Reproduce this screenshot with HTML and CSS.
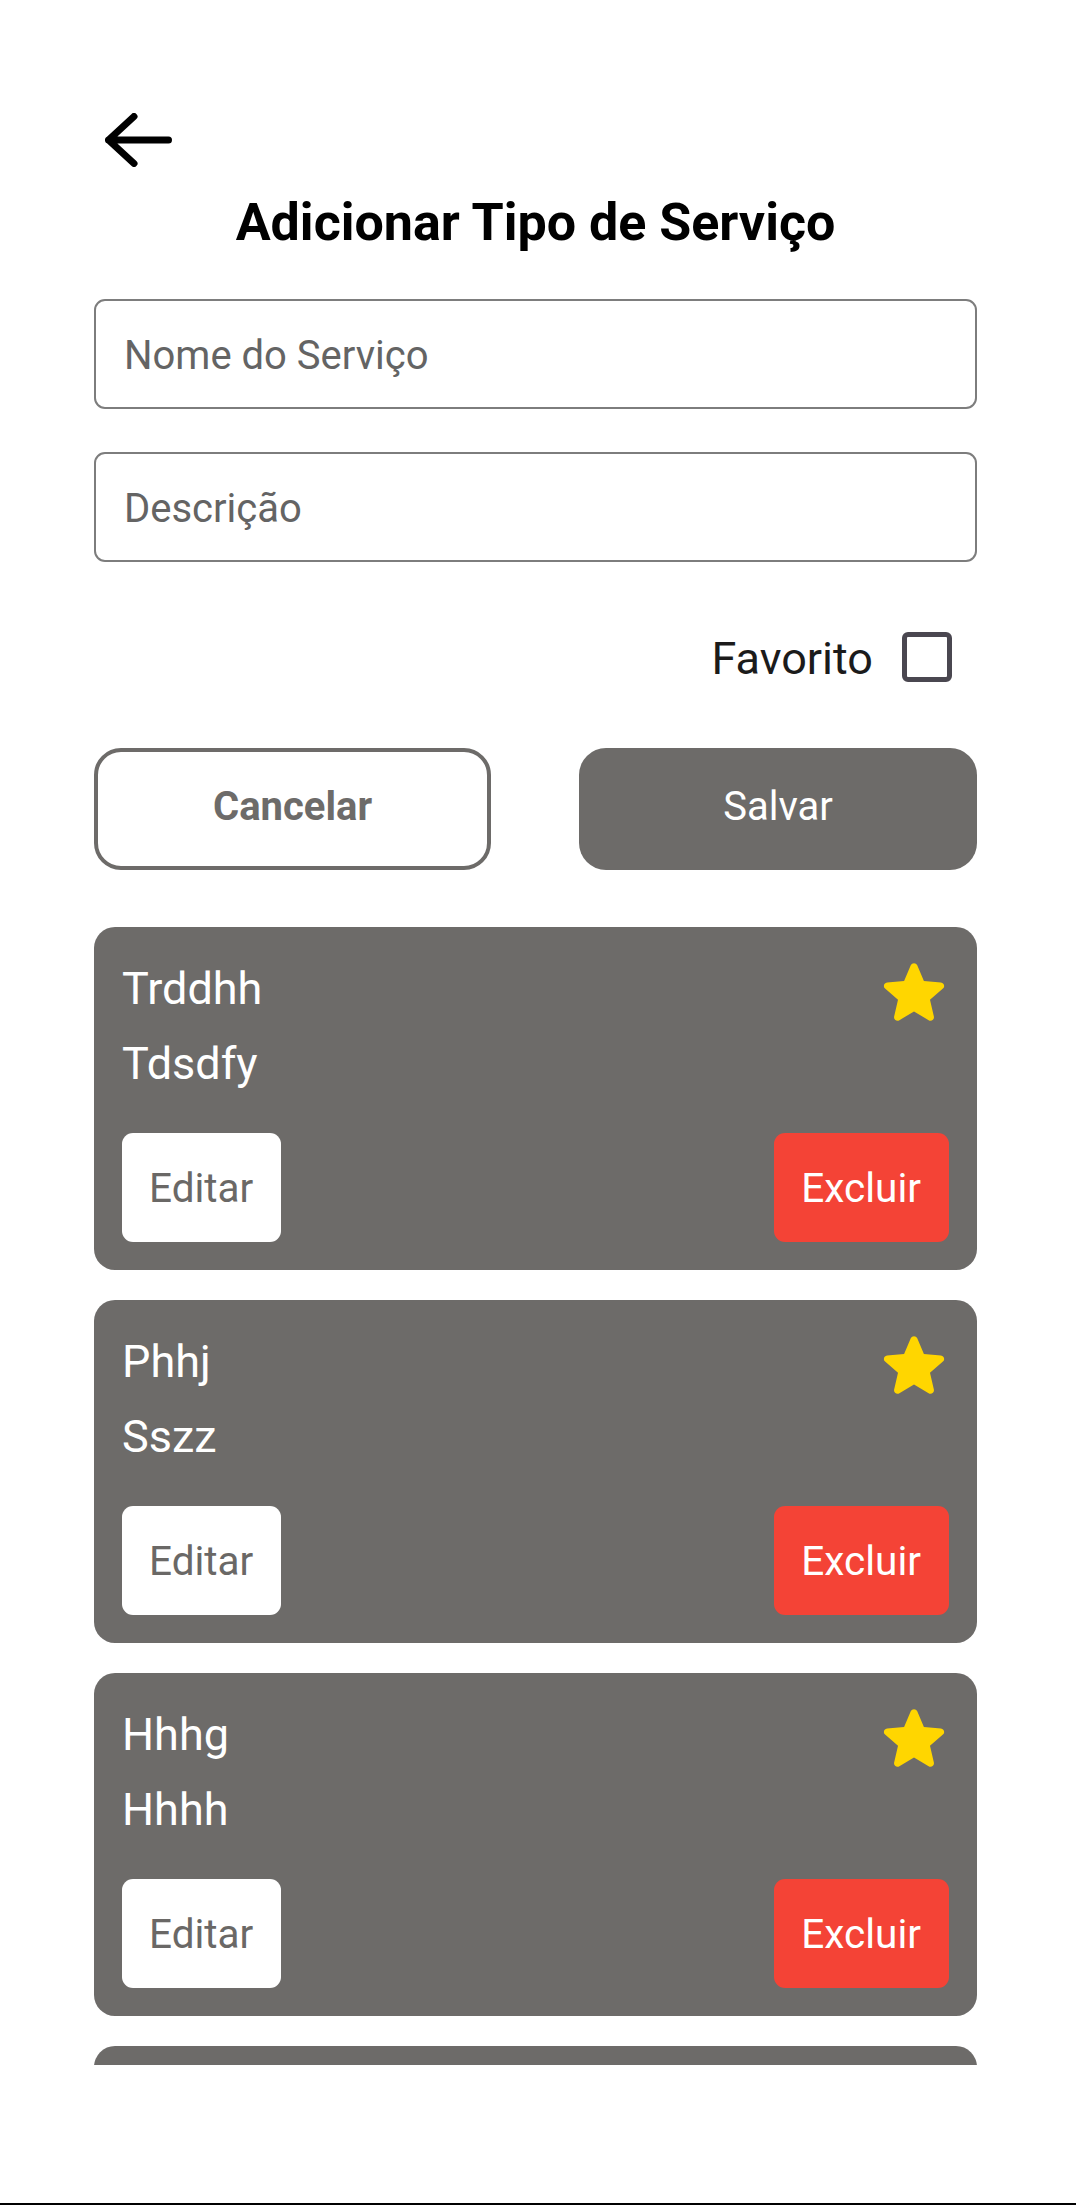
FILE: index.html
```html
<!DOCTYPE html>
<html lang="pt-BR">
<head>
<meta charset="utf-8">
<title>Adicionar Tipo de Serviço</title>
<link rel="stylesheet" href="styles.css">
</head>
<body>
<div class="screen">
  <div class="content">
    <button class="back" aria-label="Voltar">
      <svg width="67" height="54" viewBox="0 0 67 54"><path d="M3.5 27H63.5M3.5 27L29 3.5M3.5 27L29 50.5" fill="none" stroke="#000" stroke-width="7" stroke-linecap="round" stroke-linejoin="round"/></svg>
    </button>
    <h1 class="title">Adicionar Tipo de Serviço</h1>
    <div class="field"><span class="placeholder">Nome do Serviço</span></div>
    <div class="field field-2"><span class="placeholder">Descrição</span></div>
    <div class="fav-row">
      <span class="fav-label">Favorito</span>
      <span class="checkbox"></span>
    </div>
    <div class="actions">
      <button class="btn btn-cancel">Cancelar</button>
      <button class="btn btn-save">Salvar</button>
    </div>
    <div class="list">
      <div class="card">
        <div class="card-head">
          <div class="card-texts">
            <div class="card-name">Trddhh</div>
            <div class="card-desc">Tdsdfy</div>
          </div>
          <svg class="star" width="62" height="62" viewBox="3.4 2.4 17.2 17.6"><path d="M12 17.27l4.15 2.51c.76.46 1.69-.22 1.49-1.08l-1.1-4.72 3.67-3.18c.67-.58.31-1.68-.57-1.75l-4.83-.41-1.89-4.46c-.34-.81-1.5-.81-1.84 0L9.19 8.63l-4.83.41c-.88.07-1.24 1.17-.57 1.75l3.67 3.18-1.1 4.72c-.2.86.73 1.54 1.49 1.08l4.150-2.5z" fill="#ffd600"/></svg>
        </div>
        <div class="card-actions">
          <button class="cbtn cbtn-edit">Editar</button>
          <button class="cbtn cbtn-del">Excluir</button>
        </div>
      </div>
      <div class="card">
        <div class="card-head">
          <div class="card-texts">
            <div class="card-name">Phhj</div>
            <div class="card-desc">Sszz</div>
          </div>
          <svg class="star" width="62" height="62" viewBox="3.4 2.4 17.2 17.6"><path d="M12 17.27l4.15 2.51c.76.46 1.69-.22 1.49-1.08l-1.1-4.72 3.67-3.18c.67-.58.31-1.68-.57-1.75l-4.83-.41-1.89-4.46c-.34-.81-1.5-.81-1.84 0L9.19 8.63l-4.83.41c-.88.07-1.24 1.17-.57 1.75l3.67 3.18-1.1 4.72c-.2.86.73 1.54 1.49 1.08l4.15-2.5z" fill="#ffd600"/></svg>
        </div>
        <div class="card-actions">
          <button class="cbtn cbtn-edit">Editar</button>
          <button class="cbtn cbtn-del">Excluir</button>
        </div>
      </div>
      <div class="card">
        <div class="card-head">
          <div class="card-texts">
            <div class="card-name">Hhhg</div>
            <div class="card-desc">Hhhh</div>
          </div>
          <svg class="star" width="62" height="62" viewBox="3.4 2.4 17.2 17.6"><path d="M12 17.27l4.15 2.51c.76.46 1.69-.22 1.49-1.08l-1.1-4.72 3.67-3.18c.67-.58.31-1.68-.57-1.75l-4.83-.41-1.89-4.46c-.34-.81-1.5-.81-1.84 0L9.19 8.63l-4.83.41c-.88.07-1.24 1.17-.57 1.75l3.67 3.18-1.1 4.72c-.2.86.73 1.54 1.49 1.08l4.15-2.5z" fill="#ffd600"/></svg>
        </div>
        <div class="card-actions">
          <button class="cbtn cbtn-edit">Editar</button>
          <button class="cbtn cbtn-del">Excluir</button>
        </div>
      </div>
      <div class="card card-partial"></div>
    </div>
  </div>
  <div class="bottom-edge"></div>
</div>
</body>
</html>
```
FILE: styles.css
```css
* { box-sizing: border-box; }
html, body {
  margin: 0;
  padding: 0;
  background: #fff;
}
body {
  font-family: Roboto, "Noto Sans", "Liberation Sans", sans-serif;
  width: 1076px;
  height: 2205px;
  overflow: hidden;
}
.screen {
  height: 2205px;
  display: flex;
  flex-direction: column;
}
.content {
  flex: 1;
  width: 883px;
  margin-left: 94px;
  padding-top: 113px;
  display: flex;
  flex-direction: column;
  min-height: 0;
}
button {
  font-family: inherit;
  cursor: pointer;
}
.back {
  align-self: flex-start;
  margin-left: 11px;
  padding: 0;
  border: 0;
  background: none;
  width: 67px;
  height: 54px;
  display: block;
}
.back svg { display: block; }
.title {
  margin: 25px 0 0;
  font-size: 52px;
  line-height: 61px;
  font-weight: 700;
  color: #000;
  text-align: center;
}
.field {
  margin-top: 46px;
  height: 110px;
  border: 2px solid #7d7d7d;
  border-radius: 11px;
  display: flex;
  align-items: center;
  padding: 0 28px;
}
.field-2 { margin-top: 43px; }
.placeholder {
  font-size: 40px;
  color: #646464;
  line-height: 1;
  padding-top: 4px;
}
.fav-row {
  margin-top: 70px;
  height: 50px;
  display: flex;
  justify-content: flex-end;
  align-items: center;
  gap: 29px;
  padding-right: 25px;
}
.fav-label {
  font-size: 45px;
  color: #1b1b1b;
  line-height: 1;
  padding-top: 2px;
}
.checkbox {
  width: 50px;
  height: 50px;
  border: 5px solid #4a4750;
  border-radius: 6px;
}
.actions {
  margin-top: 66px;
  display: flex;
  justify-content: space-between;
}
.btn {
  width: 397px;
  height: 122px;
  border-radius: 27px;
  font-size: 40px;
  display: flex;
  align-items: center;
  justify-content: center;
  padding: 0 0 5px;
}
.btn-cancel {
  background: #fff;
  border: 4px solid #6d6b69;
  color: #6d6b69;
  font-weight: 700;
}
.btn-save {
  width: 398px;
  background: #6d6b69;
  border: 0;
  color: #fff;
  font-weight: 400;
}
.list {
  margin-top: 57px;
  height: 1138px;
  overflow: hidden;
  display: flex;
  flex-direction: column;
  gap: 30px;
}
.card {
  flex: none;
  height: 343px;
  background: #6d6b69;
  border-radius: 21px;
  padding: 32px 28px 28px;
  display: flex;
  flex-direction: column;
}
.card-head {
  display: flex;
  justify-content: space-between;
  align-items: flex-start;
}
.card-texts {
  display: flex;
  flex-direction: column;
  gap: 15px;
}
.card-name, .card-desc {
  font-size: 45px;
  line-height: 60px;
  color: #fff;
}
.star {
  display: block;
  margin-right: 4px;
}
.card-actions {
  margin-top: auto;
  display: flex;
  justify-content: space-between;
}
.cbtn {
  height: 109px;
  border: 0;
  border-radius: 11px;
  font-size: 40.5px;
  padding: 0 28px 0 27px;
  display: flex;
  align-items: center;
}
.cbtn-edit {
  background: #fff;
  color: #6a6866;
}
.cbtn-del {
  background: #f44336;
  color: #fff;
}
.bottom-edge {
  height: 2px;
  background: #000;
  flex: none;
  margin-top: 138px;
}
```
